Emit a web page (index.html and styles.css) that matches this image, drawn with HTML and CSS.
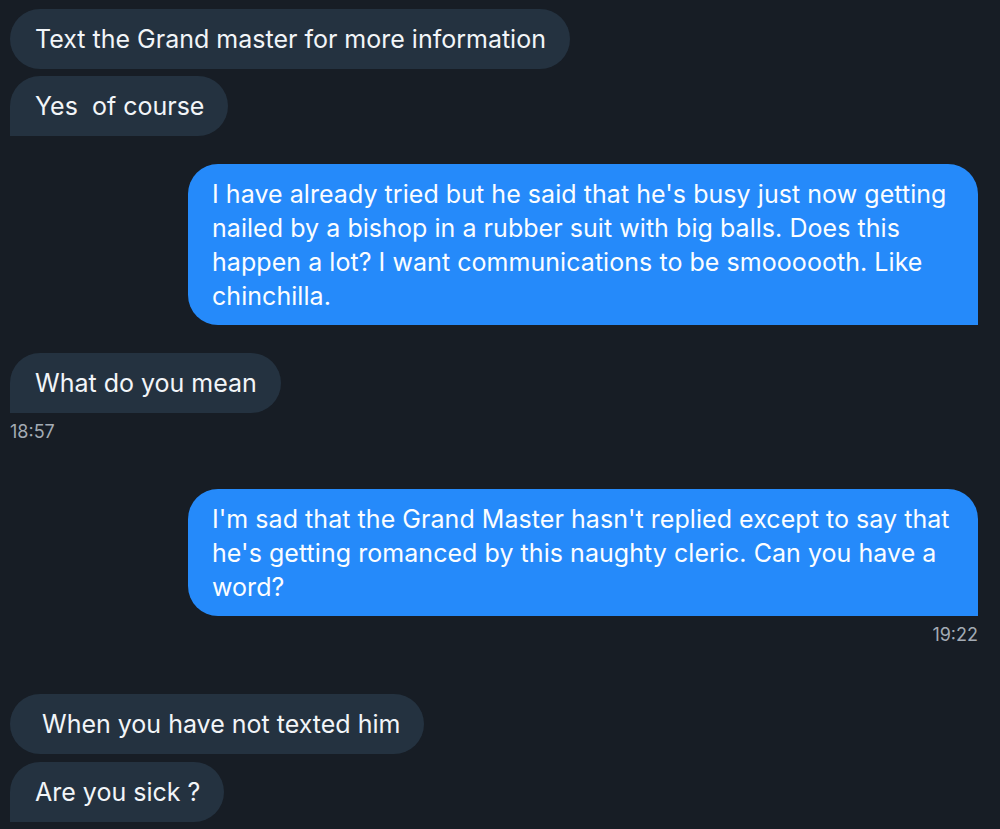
FILE: index.html
```html
<!DOCTYPE html>
<html>
<head>
<meta charset="utf-8">
<link rel="stylesheet" href="styles.css">
</head>
<body>
<div class="chat">
  <div class="msg in"><div class="bubble">Text the Grand master for more information</div></div>
  <div class="msg in tail gap-s"><div class="bubble">Yes&nbsp; of course</div></div>

  <div class="msg out gap-l"><div class="bubble">I have already tried but he said that he's busy just now getting nailed by a bishop in a rubber suit with big balls. Does this happen a lot? I want communications to be smoooooth. Like chinchilla.</div></div>

  <div class="msg in tail gap-l"><div class="bubble">What do you mean</div><div class="time">18:57</div></div>

  <div class="msg out tail gap-xl"><div class="bubble">I'm sad that the Grand Master hasn't replied except to say that he's getting romanced by this naughty cleric. Can you have a word?</div><div class="time">19:22</div></div>

  <div class="msg in gap-xxl"><div class="bubble lead">When you have not texted him</div></div>
  <div class="msg in tail gap-m"><div class="bubble">Are you sick ?</div></div>
</div>
</body>
</html>
```
FILE: styles.css
```css
html, body {
  margin: 0;
  padding: 0;
  background: #171d25;
}
body {
  font-family: Inter, "Noto Sans", "Liberation Sans", sans-serif;
  color: #f2f5f8;
}
.chat {
  display: flex;
  flex-direction: column;
  padding: 9px 22px 0 10px;
}
.msg {
  display: flex;
  flex-direction: column;
}
.msg.in { align-items: flex-start; }
.msg.out { align-items: flex-end; }
.gap-s { margin-top: 7px; }
.gap-m { margin-top: 8px; }
.gap-l { margin-top: 28px; }
.gap-xl { margin-top: 47px; }
.gap-xxl { margin-top: 49px; }
.bubble {
  font-size: 25px;
  line-height: 34px;
  border-radius: 30px;
}
.in .bubble {
  background: #243240;
  padding: 13px 24px 13px 25px;
  white-space: nowrap;
}
.in .bubble.lead { padding-left: 32px; }
.in.tail .bubble { border-bottom-left-radius: 0; }
.out .bubble {
  background: #258afa;
  color: #fbfdff;
  width: 746px;
  padding: 13px 20px 12px 24px;
  letter-spacing: 0.05px;
  border-radius: 30px 30px 0 30px;
}
.time {
  font-size: 18px;
  line-height: 20px;
  color: #a3abb4;
  margin-top: 9px;
}
```
